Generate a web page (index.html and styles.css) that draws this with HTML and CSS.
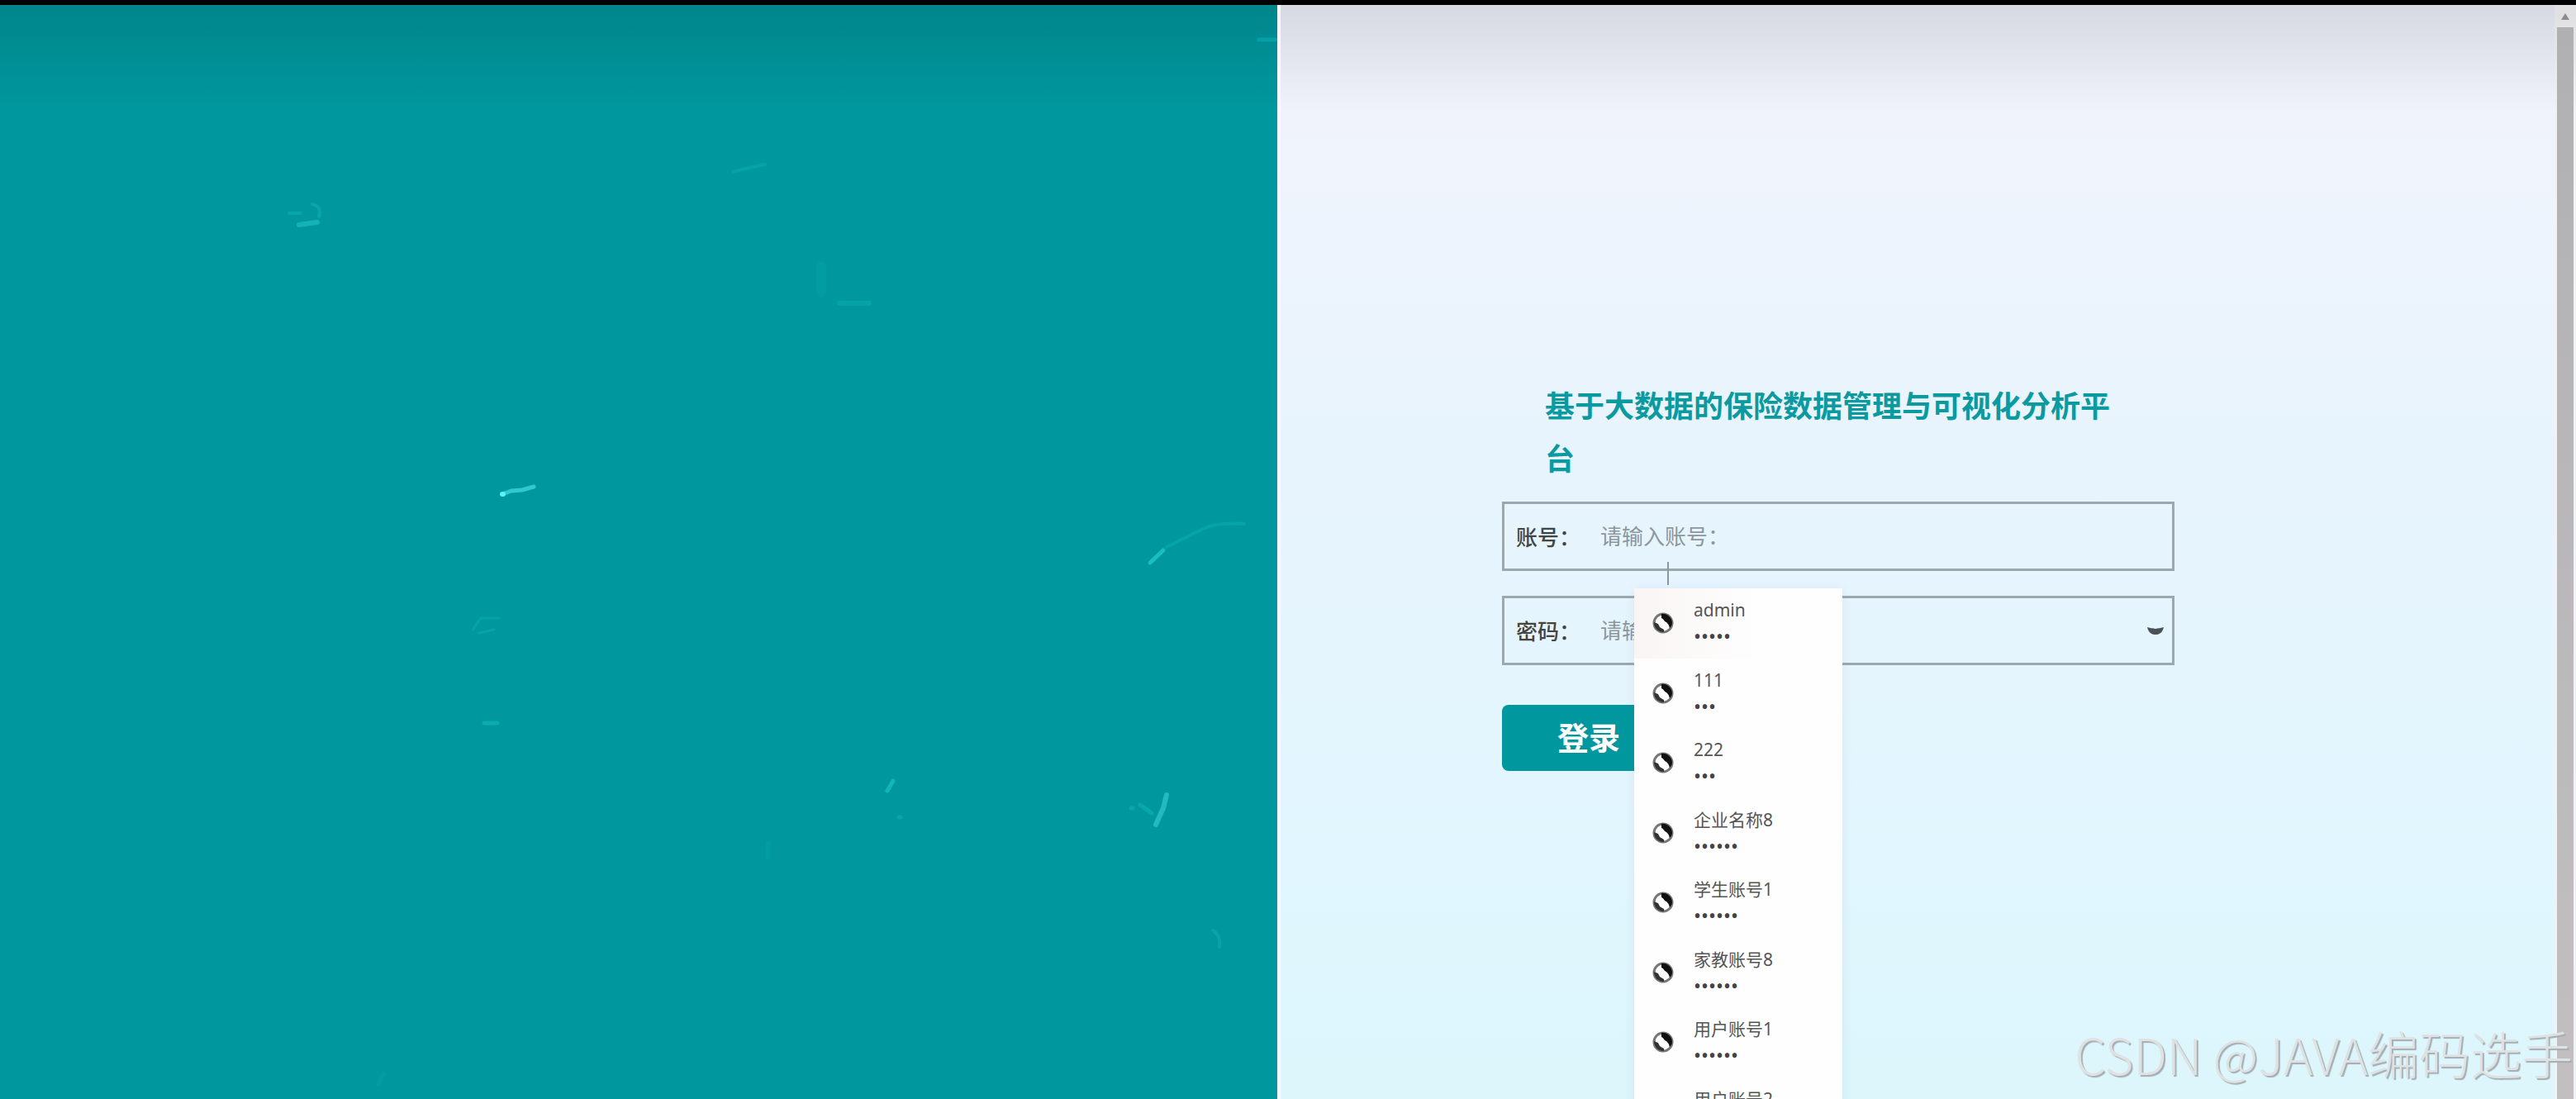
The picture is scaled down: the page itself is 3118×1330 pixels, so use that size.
FILE: index.html
```html
<!DOCTYPE html>
<html lang="zh-CN">
<head>
    <meta charset="UTF-8">
    <meta name="viewport" content="width=device-width, initial-scale=1.0">
    <title>基于大数据的保险数据管理与可视化分析平台</title>
    <link rel="stylesheet" href="styles.css">
</head>
<body>
    <svg class="symbols" aria-hidden="true">
        <symbol id="globe" viewBox="0 0 26 26">
            <circle cx="13" cy="13" r="11" fill="#fff" stroke="#777" stroke-width="3"/>
            <path d="M11 2C17 1 24 6 24 13C24 16 22 18 21 19C20 15 19 14 17 12C14 11 14 8 11 7Z" fill="#111"/>
            <path d="M2 12L7 14L9 18L14 21L14 24C7 24 2 19 2 12Z" fill="#333"/>
        </symbol>
    </svg>

    <div class="page">
        <div class="banner">
            <svg viewBox="0 6 1546 1324" preserveAspectRatio="xMinYMin slice" fill="none" stroke-linecap="round">
                <path d="M608 598L619 594L632 593L646 589" stroke="#2fc9cf" stroke-width="5"/>
                <path d="M608 598h1" stroke="#5ff0f4" stroke-width="6"/>
                <path d="M362 272L384 269" stroke="#12b2b8" stroke-width="6"/>
                <path d="M378 247Q390 250 386 262M350 258h14" stroke="#08a5ab" stroke-width="4"/>
                <path d="M888 208Q905 203 926 199" stroke="#05a3a8" stroke-width="4"/>
                <path d="M994 322v32" stroke="#029ca2" stroke-width="12"/>
                <path d="M1016 367h36" stroke="#05a3a9" stroke-width="6"/>
                <path d="M1392 681L1408 666" stroke="#19bec4" stroke-width="5"/>
                <path d="M1412 662Q1440 648 1456 640T1506 634" stroke="#05a4aa" stroke-width="4"/>
                <path d="M1074 957L1081 945" stroke="#13b4ba" stroke-width="5"/>
                <path d="M1088 989h2M1369 978h2M1380 974L1394 984" stroke="#08a7ad" stroke-width="5"/>
                <path d="M1412 962L1408 978L1399 998" stroke="#22b9c0" stroke-width="6"/>
                <path d="M1468 1126Q1478 1132 1476 1146" stroke="#07a4aa" stroke-width="4"/>
                <path d="M572 762L582 748L604 748M598 762L580 766" stroke="#06a3a9" stroke-width="3"/>
                <path d="M586 875h16" stroke="#0aabb1" stroke-width="5"/>
                <path d="M930 1020v18M458 1312L464 1300" stroke="#029ca2" stroke-width="6"/>
                <path d="M1524 48h20" stroke="#04a0a6" stroke-width="5"/>
            </svg>
        </div>

        <main class="login">
            <form class="login-form">
                <h1>基于大数据的保险数据管理与可视化分析平台</h1>
                <div class="field">
                    <label for="account">账号：</label>
                    <input type="text" id="account" placeholder="请输入账号：" autocomplete="off">
                    <svg class="cursor" viewBox="0 0 10 30" aria-hidden="true">
                        <path d="M5 1V29" stroke="#8b989c" stroke-width="2"/>
                    </svg>
                    <ul class="accounts">
                        <li class="active">
                            <svg><use href="#globe"/></svg>
                            <div><p>admin</p><p class="dots">•••••</p></div>
                        </li>
                        <li>
                            <svg><use href="#globe"/></svg>
                            <div><p>111</p><p class="dots">•••</p></div>
                        </li>
                        <li>
                            <svg><use href="#globe"/></svg>
                            <div><p>222</p><p class="dots">•••</p></div>
                        </li>
                        <li>
                            <svg><use href="#globe"/></svg>
                            <div><p>企业名称8</p><p class="dots">••••••</p></div>
                        </li>
                        <li>
                            <svg><use href="#globe"/></svg>
                            <div><p>学生账号1</p><p class="dots">••••••</p></div>
                        </li>
                        <li>
                            <svg><use href="#globe"/></svg>
                            <div><p>家教账号8</p><p class="dots">••••••</p></div>
                        </li>
                        <li>
                            <svg><use href="#globe"/></svg>
                            <div><p>用户账号1</p><p class="dots">••••••</p></div>
                        </li>
                        <li>
                            <svg><use href="#globe"/></svg>
                            <div><p>用户账号2</p></div>
                        </li>
                    </ul>
                </div>
                <div class="field">
                    <label for="password">密码：</label>
                    <input type="password" id="password" placeholder="请输入密码：">
                    <button type="button" class="eye" aria-label="显示密码">
                        <svg viewBox="0 0 24 14">
                            <path d="M2 3Q12 6 22 3Q20 12 12 12Q4 12 2 3Z" fill="#4a5257"/>
                            <path d="M7 2Q12 8 17 2Z" fill="#e6f4fd"/>
                        </svg>
                    </button>
                </div>
                <button type="submit" class="submit">登录</button>
            </form>
        </main>

        <div class="scrollbar">
            <svg viewBox="0 0 10 8"><path d="M5 0L10 8H0Z" fill="#8b8b8d"/></svg>
            <div class="thumb"></div>
        </div>
    </div>

    <div class="watermark"><span>CSDN @JAVA</span>编码选手</div>
</body>
</html>
```

FILE: styles.css
```css
* {
    box-sizing: border-box;
}
body, h1, p, ul {
    margin: 0;
    padding: 0;
}
body {
    position: relative;
    height: 100vh;
    overflow: hidden;
    border-top: 6px solid #000;
    font-family: "Noto Sans", "Noto Sans CJK SC", sans-serif;
}
.symbols {
    position: absolute;
    width: 0;
    height: 0;
}
.page {
    display: grid;
    grid-template-columns: minmax(0, 1fr) minmax(0, 1fr) 26px;
    grid-template-rows: 100%;
    height: 100%;
}
.banner {
    background: linear-gradient(rgba(0, 40, 40, 0.16), rgba(0, 40, 40, 0) 130px), #00989e;
}
.banner svg {
    display: block;
    width: 100%;
    height: 100%;
}
.login {
    padding: 454px 0 0 268px;
    border-left: 4px solid #f8f9fd;
    background: linear-gradient(rgba(0, 0, 0, 0.11), rgba(0, 0, 0, 0) 130px), linear-gradient(#f0f3fc 10%, #e8f4fd 40%, #e2f6fe 75%, #dcf6fc);
}
.login-form {
    width: 814px;
}
h1 {
    padding: 0 52px;
    margin-bottom: 19px;
    font-size: 36px;
    line-height: 64px;
    color: #0b9a9f;
}
.field {
    position: relative;
    display: flex;
    align-items: center;
    height: 84px;
    margin-bottom: 30px;
    padding: 0 8px 0 14px;
    border: 3px solid #9ca8ae;
    font-size: 26px;
}
.field label {
    width: 102px;
    color: #444;
    font-weight: 500;
}
.field input {
    flex: 1;
    min-width: 0;
    padding: 0;
    border: none;
    outline: none;
    background: transparent;
    font: inherit;
}
.field input::placeholder {
    color: #8d979c;
}
.eye {
    padding: 0;
    border: none;
    background: transparent;
    cursor: pointer;
}
.eye svg {
    display: block;
    width: 24px;
    height: 14px;
}
.cursor {
    position: absolute;
    top: 69px;
    left: 193px;
    width: 10px;
    height: 30px;
}
.accounts {
    position: absolute;
    z-index: 2;
    top: 102px;
    left: 157px;
    display: grid;
    grid-template-rows: repeat(8, 1fr);
    width: 252px;
    height: 676px;
    list-style: none;
    background: #fefefe;
    box-shadow: 0 2px 12px rgba(120, 110, 150, 0.12);
}
.accounts li {
    display: flex;
    align-items: flex-start;
    gap: 24px;
    padding: 10px 0 0 22px;
}
.accounts li.active {
    background: linear-gradient(90deg, #f9f5f4, #fefefe 60%);
}
.accounts svg {
    width: 26px;
    height: 26px;
    margin-top: 19px;
}
.accounts p {
    font-size: 21px;
    line-height: 32px;
    color: #555;
}
.accounts .dots {
    font-size: 24px;
    color: #444;
}
.submit {
    display: block;
    width: 210px;
    height: 80px;
    margin-top: 48px;
    padding: 0 0 6px;
    border: none;
    border-radius: 8px;
    background: #00989e;
    color: #fff;
    font-family: inherit;
    font-size: 38px;
    font-weight: bold;
    cursor: pointer;
}
.scrollbar {
    display: flex;
    flex-direction: column;
    align-items: center;
    padding-top: 10px;
    gap: 9px;
    background: linear-gradient(#dfdfe2, #f2f2f4 130px, #eef3f6);
}
.scrollbar svg {
    width: 10px;
    height: 8px;
}
.thumb {
    flex: 1;
    width: 20px;
    background: linear-gradient(#b0b0b2, #c3bfc1);
}
.watermark {
    position: absolute;
    right: 4px;
    bottom: 10px;
    font-family: "Noto Sans CJK SC", sans-serif;
    font-size: 62px;
    font-weight: 300;
    line-height: 90px;
    color: #dfe1e3;
    text-shadow: 2px 2px 1px #a3afb4;
    white-space: nowrap;
}
.watermark span {
    font-size: 60px;
}
```
